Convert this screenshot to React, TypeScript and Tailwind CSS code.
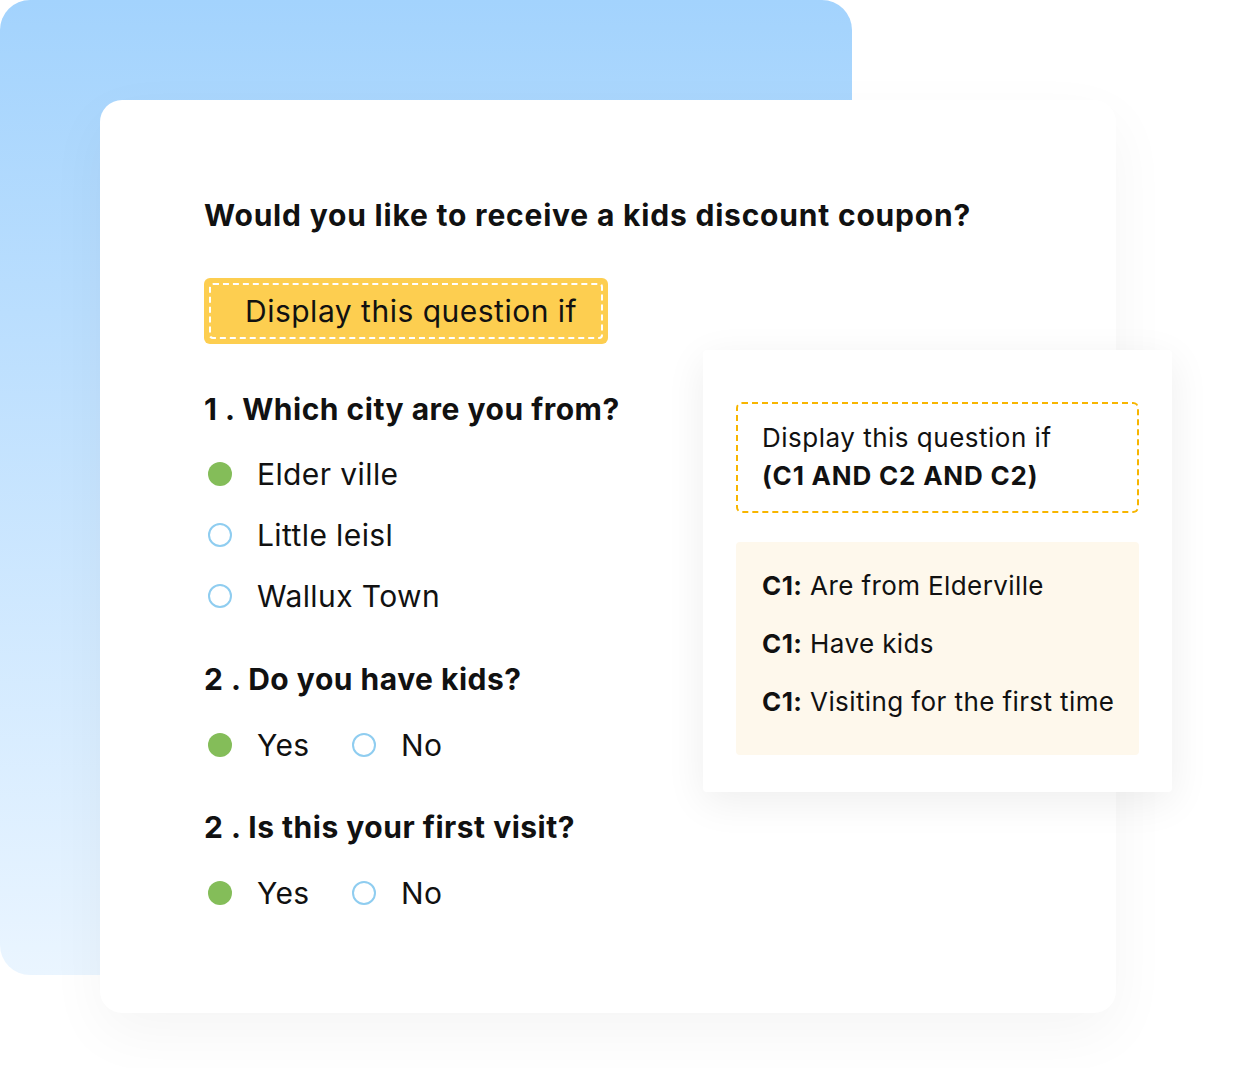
import React from "react";

const font = { fontFamily: "Inter, 'Noto Sans', sans-serif" };

function Dot({ on }: { on: boolean }) {
  return on ? (
    <span className="block w-[24px] h-[24px] rounded-full bg-[#84bd59] shrink-0" />
  ) : (
    <span className="block w-[24px] h-[24px] rounded-full border-2 border-[#8fcdf0] shrink-0" />
  );
}

function Option({ on, label, wide }: { on: boolean; label: string; wide?: boolean }) {
  return (
    <div className={wide ? "flex items-center h-[40px] w-[144px]" : "flex items-center h-[40px]"}>
      <span className="w-[53px] pl-[4px]">
        <Dot on={on} />
      </span>
      <span className="text-[30px] text-[#111] tracking-[0.4px]">{label}</span>
    </div>
  );
}

function YesNo() {
  return (
    <div className="flex items-center mt-[26px]">
      <Option on wide label="Yes" />
      <Option on={false} label="No" />
    </div>
  );
}

export default function App() {
  const conds = ["Are from Elderville", "Have kids", "Visiting for the first time"];
  const q = "text-[30px] font-bold text-[#111] leading-[40px] tracking-[0.5px]";
  return (
    <div className="relative w-[1253px] h-[1068px] bg-white overflow-hidden" style={font}>
      <div className="absolute left-0 top-0 w-[852px] h-[975px] rounded-[30px] bg-gradient-to-b from-[#a3d3fd] to-[#eaf5ff]" />

      <div className="absolute left-[100px] top-[100px] w-[1016px] h-[913px] rounded-[22px] bg-white shadow-[0_20px_60px_rgba(0,0,0,0.045)] pl-[104px] pt-[95px]">
        <h1 className="text-[30px] font-bold text-[#111] leading-[40px] tracking-[0.8px]">
          Would you like to receive a kids discount coupon?
        </h1>

        <div className="mt-[43px] w-[404px] h-[66px] rounded-[6px] bg-[#fdce50] p-[5px]">
          <div className="h-full rounded-[4px] border-2 border-dashed border-white flex items-center pl-[34px]">
            <span className="text-[30px] text-[#111] tracking-[0.5px]">Display this question if</span>
          </div>
        </div>

        <h2 className={"mt-[45px] " + q}>1 . Which city are you from?</h2>
        <div className="mt-[25px] flex flex-col gap-[21px]">
          <Option on label="Elder ville" />
          <Option on={false} label="Little leisl" />
          <Option on={false} label="Wallux Town" />
        </div>

        <h2 className={"mt-[43px] " + q}>2 . Do you have kids?</h2>
        <YesNo />

        <h2 className={"mt-[42px] " + q}>2 . Is this your first visit?</h2>
        <YesNo />
      </div>

      <div className="absolute left-[703px] top-[350px] w-[469px] h-[442px] rounded-[4px] bg-white shadow-[0_10px_40px_rgba(0,0,0,0.07)] px-[33px] pt-[52px]">
        <div className="h-[111px] rounded-[6px] border-2 border-dashed border-[#f7b500] pl-[24px] pt-[15px]">
          <p className="text-[26px] text-[#111] leading-[38px] tracking-[0.5px]">Display this question if</p>
          <p className="text-[26px] font-bold text-[#111] leading-[38px] tracking-[0.8px]">(C1 AND C2 AND C2)</p>
        </div>
        <div className="mt-[29px] h-[213px] rounded-[4px] bg-[#fef8ec] pl-[26px] pt-[25px] flex flex-col gap-[20px]">
          {conds.map((c) => (
            <p key={c} className="text-[26px] text-[#111] leading-[38px] tracking-[0.4px]">
              <span className="font-bold">C1:</span> {c}
            </p>
          ))}
        </div>
      </div>
    </div>
  );
}
